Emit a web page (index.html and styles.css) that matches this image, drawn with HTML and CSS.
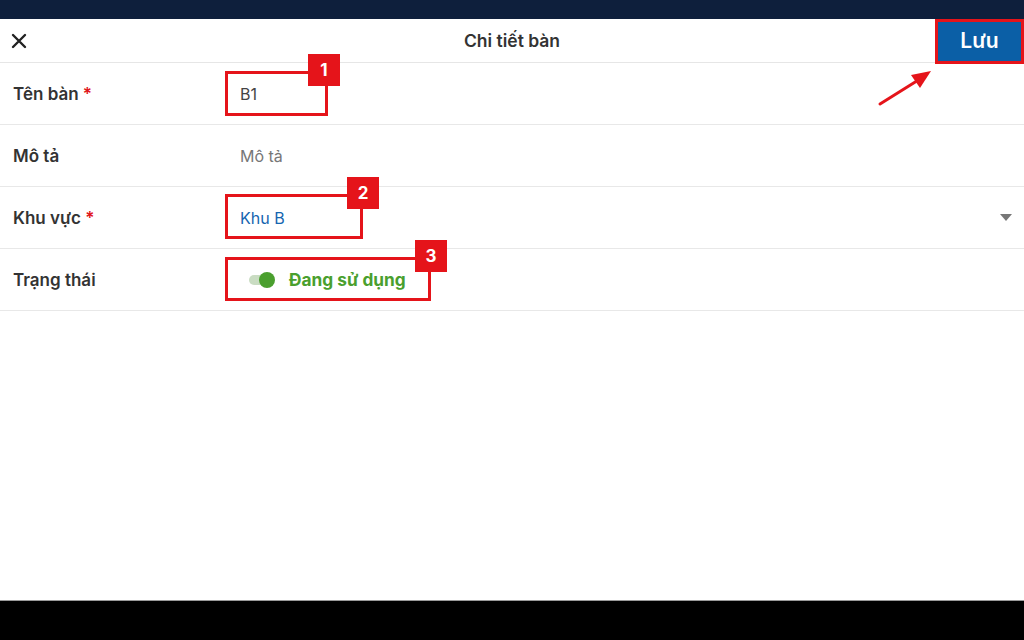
FILE: index.html
```html
<!DOCTYPE html>
<html lang="vi">
<head>
  <meta charset="UTF-8">
  <meta name="viewport" content="width=device-width, initial-scale=1.0">
  <title>Chi tiết bàn</title>
  <link rel="stylesheet" href="styles.css">
</head>
<body>

<div class="screen">
  <div class="status-bar"></div>

  <header class="top-bar">
    <button class="close-btn" aria-label="Đóng">
      <svg width="16" height="16" viewBox="0 0 16 16">
        <path d="M2 2 L14 14 M14 2 L2 14" stroke="#222" stroke-width="2.4" stroke-linecap="round"/>
      </svg>
    </button>
    <h1>Chi tiết bàn</h1>
    <button class="save-btn">Lưu</button>
  </header>

  <div class="form">
    <div class="row">
      <div class="label">Tên bàn <span class="req">*</span></div>
      <div class="value">B1</div>
    </div>
    <div class="row">
      <div class="label">Mô tả</div>
      <div class="value placeholder">Mô tả</div>
    </div>
    <div class="row">
      <div class="label">Khu vực <span class="req">*</span></div>
      <div class="value link">Khu B</div>
      <span class="caret"></span>
    </div>
    <div class="row">
      <div class="label">Trạng thái</div>
      <div class="value status">
        <span class="toggle"><span class="knob"></span></span>
        Đang sử dụng
      </div>
    </div>
  </div>

  <div class="spacer"></div>
  <div class="nav-bar"></div>

  <!-- annotation overlay -->
  <div class="mark mark-1"><span class="badge">1</span></div>
  <div class="mark mark-2"><span class="badge">2</span></div>
  <div class="mark mark-3"><span class="badge">3</span></div>
  <div class="mark mark-save"></div>
  <svg class="arrow" width="70" height="50" viewBox="0 0 70 50">
    <line x1="4" y1="44" x2="44" y2="19" stroke="#e5141a" stroke-width="3" stroke-linecap="round"/>
    <polygon points="55,11 35,15 44,28" fill="#e5141a"/>
  </svg>
</div>

</body>
</html>
```

FILE: styles.css
```css
/* General */
body {
  margin: 0;
  font-family: 'Inter', 'Roboto', sans-serif;
  color: #333;
  background: #fff;
}

.screen {
  position: relative;
  width: 1024px;
  height: 640px;
  display: flex;
  flex-direction: column;
  overflow: hidden;
}

.status-bar {
  height: 19px;
  background-color: #0e1f3c;
}

/* Header */
.top-bar {
  height: 44px;
  box-sizing: border-box;
  border-bottom: 1px solid #e6e6e6;
  display: flex;
  align-items: center;
  position: relative;
}

.top-bar h1 {
  position: absolute;
  left: 0;
  right: 0;
  margin: 0;
  text-align: center;
  font-size: 17.5px;
  font-weight: 600;
  color: #333;
  pointer-events: none;
}

.close-btn {
  background: none;
  border: none;
  padding: 0;
  margin-left: 11px;
  width: 16px;
  height: 16px;
  display: flex;
}

.save-btn {
  margin-left: auto;
  height: 44px;
  width: 89px;
  border: none;
  background-color: #0b5fa6;
  color: #fff;
  font-family: inherit;
  font-size: 21px;
  font-weight: 600;
  padding: 0;
}

/* Form */
.row {
  height: 62px;
  box-sizing: border-box;
  border-bottom: 1px solid #e8e8e8;
  display: flex;
  align-items: center;
  font-size: 16px;
}

.label {
  width: 240px;
  padding-left: 13px;
  box-sizing: border-box;
  font-size: 17px;
  font-weight: 600;
  color: #333;
}

.req {
  color: #e0141a;
}

.value {
  flex: 1;
  color: #444;
}

.value.placeholder {
  color: #777;
}

.value.link {
  color: #1565b0;
}

.caret {
  width: 0;
  height: 0;
  border-left: 6px solid transparent;
  border-right: 6px solid transparent;
  border-top: 7px solid #777;
  margin-right: 12px;
}

.value.status {
  display: flex;
  align-items: center;
  gap: 15px;
  color: #4a9f2e;
  font-size: 17.3px;
  font-weight: 700;
  padding-left: 9px;
}

.toggle {
  position: relative;
  width: 25px;
  height: 10px;
  border-radius: 5px;
  background-color: #c9dcc2;
}

.toggle .knob {
  position: absolute;
  right: -1px;
  top: -3px;
  width: 16px;
  height: 16px;
  border-radius: 50%;
  background-color: #4a9f2e;
}

.spacer {
  flex: 1;
}

.nav-bar {
  height: 39px;
  background-color: #000;
  border-top: 1px solid #9a9a9a;
}

/* Annotations */
.mark {
  position: absolute;
  border: 3px solid #e5141a;
  box-sizing: border-box;
}

.mark-1 { left: 225px; top: 71px; width: 103px; height: 45px; }
.mark-2 { left: 225px; top: 194px; width: 138px; height: 45px; }
.mark-3 { left: 225px; top: 257px; width: 206px; height: 44px; }
.mark-save { left: 935px; top: 19px; width: 89px; height: 45px; }

.badge {
  position: absolute;
  right: -19px;
  top: -20px;
  width: 32px;
  height: 32px;
  background-color: #e5141a;
  color: #fff;
  font-size: 17px;
  font-weight: 700;
  display: flex;
  align-items: center;
  justify-content: center;
}

.mark-1 .badge {
  right: -15px;
}

.arrow {
  position: absolute;
  left: 876px;
  top: 60px;
}
```
